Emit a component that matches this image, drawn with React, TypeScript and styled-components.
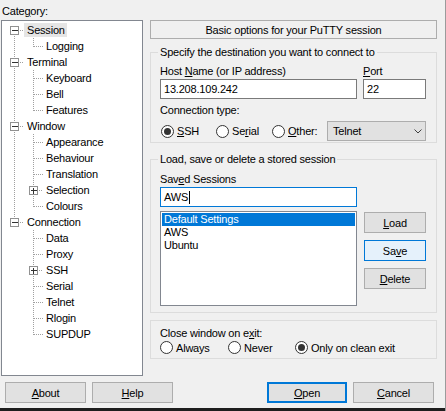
import React from 'react';
import styled, { createGlobalStyle } from 'styled-components';

const GlobalStyle = createGlobalStyle`
  html, body {
    margin: 0;
    padding: 0;
    background: #f0f0f0;
  }
  * {
    box-sizing: border-box;
  }
`;

const Window = styled.div`
  width: 446px;
  height: 411px;
  display: flex;
  flex-direction: column;
  background: #f0f0f0;
  border-right: 1px solid #9b9b9b;
  font-family: "Liberation Sans", Arial, sans-serif;
  font-size: 11px;
  letter-spacing: -0.2px;
  color: #000;
  overflow: hidden;
`;

const Main = styled.div`
  display: flex;
  height: 376px;
`;

const LeftColumn = styled.div`
  width: 150px;
  padding-left: 1px;
  display: flex;
  flex-direction: column;
`;

const CategoryLabel = styled.div`
  height: 20px;
  padding: 4px 0 0 1px;
  line-height: 14px;
`;

const TreeBox = styled.div`
  width: 142px;
  height: 356px;
  border: 1px solid #828790;
  background: #fff;
  padding-top: 1px;
  overflow: hidden;
`;

const TreeRow = styled.div`
  display: flex;
  height: 16px;
  white-space: nowrap;
`;

const TreeLabel = styled.span<{ $selected?: boolean }>`
  height: 14px;
  margin-top: 1px;
  padding: 0 2px 0 3px;
  line-height: 14px;
  background: ${({ $selected }) => ($selected ? '#e5e5e5' : 'transparent')};
`;

const RightColumn = styled.div`
  width: 287px;
  display: flex;
  flex-direction: column;
  padding-top: 20px;
`;

const HeaderBox = styled.div`
  height: 19px;
  border: 1px solid #adadad;
  display: flex;
  align-items: center;
  justify-content: center;
  line-height: 14px;
`;

const Group = styled.fieldset<{ $top: number; $pt: number; $pb: number }>`
  margin: ${({ $top }) => $top}px 0 0;
  padding: ${({ $pt }) => $pt}px 9px ${({ $pb }) => $pb}px;
  border: 1px solid #dcdcdc;
  min-width: 0;
`;

const Legend = styled.legend`
  margin-left: -2px;
  padding: 0 2px;
  line-height: 14px;
`;

const PlainGroup = styled.div`
  margin-top: 7px;
  padding: 5px 9px 4px;
  border: 1px solid #dcdcdc;
`;

const Label = styled.div<{ $gap?: number }>`
  line-height: 14px;
  height: 14px;
  margin-top: ${({ $gap }) => $gap ?? 0}px;
  white-space: nowrap;
`;

const HostGrid = styled.div`
  display: grid;
  grid-template-columns: 197px 63px;
  column-gap: 6px;
`;

const TextField = styled.div<{ $focused?: boolean; $gap?: number }>`
  height: 20px;
  margin-top: ${({ $gap }) => $gap ?? 1}px;
  border: 1px solid ${({ $focused }) => ($focused ? '#0078d7' : '#7a7a7a')};
  background: #fff;
  padding: 0 2px 0 3px;
  display: flex;
  align-items: center;
  white-space: nowrap;
`;

const Caret = styled.span`
  width: 1px;
  height: 13px;
  margin-left: 1px;
  background: #000;
`;

const RadioRow = styled.div<{ $columns: string; $height: number; $gap: number; $indent?: number }>`
  display: grid;
  grid-template-columns: ${({ $columns }) => $columns};
  height: ${({ $height }) => $height}px;
  margin-top: ${({ $gap }) => $gap}px;
  padding-left: ${({ $indent }) => $indent ?? 0}px;
  align-items: center;
`;

const Radio = styled.div`
  display: flex;
  align-items: center;
  gap: 3px;
  white-space: nowrap;
`;

const RadioCircle = styled.span<{ $checked?: boolean }>`
  width: 13px;
  height: 13px;
  border-radius: 50%;
  border: 1px solid #333;
  background: #fff;
  display: flex;
  align-items: center;
  justify-content: center;
  flex-shrink: 0;
  &::after {
    content: '';
    width: 7px;
    height: 7px;
    border-radius: 50%;
    background: #333;
    display: ${({ $checked }) => ($checked ? 'block' : 'none')};
  }
`;

const Combo = styled.div`
  height: 20px;
  border: 1px solid #adadad;
  background: #e1e1e1;
  padding: 0 3px 0 5px;
  display: flex;
  align-items: center;
  justify-content: space-between;
`;

const SessionGrid = styled.div`
  display: grid;
  grid-template-columns: 197px 62px;
  column-gap: 7px;
  margin-top: 4px;
`;

const ListBox = styled.div`
  height: 95px;
  border: 1px solid #828790;
  background: #fff;
  padding: 1px;
`;

const ListItem = styled.div<{ $selected?: boolean }>`
  height: 13px;
  line-height: 13px;
  padding-left: 2px;
  background: ${({ $selected }) => ($selected ? '#0078d7' : 'transparent')};
  color: ${({ $selected }) => ($selected ? '#fff' : '#000')};
`;

const SideButtons = styled.div`
  display: flex;
  flex-direction: column;
  gap: 7px;
  padding-top: 1px;
`;

const Button = styled.div<{ $width: number; $variant?: 'default' | 'hot' }>`
  width: ${({ $width }) => $width}px;
  height: 21px;
  display: flex;
  align-items: center;
  justify-content: center;
  background: ${({ $variant }) => ($variant === 'hot' ? '#e5f1fb' : '#e1e1e1')};
  border: ${({ $variant }) =>
    $variant === 'default'
      ? '2px solid #0078d7'
      : $variant === 'hot'
        ? '1px solid #0078d7'
        : '1px solid #adadad'};
  white-space: nowrap;
`;

const ButtonBar = styled.div`
  display: flex;
  gap: 6px;
  margin-top: 6px;
  padding: 0 11px 0 5px;
`;

const Spacer = styled.div`
  flex: 1;
`;

const TaskbarEdge = styled.div`
  margin-top: auto;
  height: 3px;
  background: #1e1e1e;
`;

type TreeNode = {
  label: string;
  level: 0 | 1;
  expander?: '-' | '+';
  first?: boolean;
  last?: boolean;
  parentHasNext?: boolean;
  selected?: boolean;
};

const tree: TreeNode[] = [
  { label: 'Session', level: 0, expander: '-', first: true, selected: true },
  { label: 'Logging', level: 1, last: true, parentHasNext: true },
  { label: 'Terminal', level: 0, expander: '-' },
  { label: 'Keyboard', level: 1, parentHasNext: true },
  { label: 'Bell', level: 1, parentHasNext: true },
  { label: 'Features', level: 1, last: true, parentHasNext: true },
  { label: 'Window', level: 0, expander: '-' },
  { label: 'Appearance', level: 1, parentHasNext: true },
  { label: 'Behaviour', level: 1, parentHasNext: true },
  { label: 'Translation', level: 1, parentHasNext: true },
  { label: 'Selection', level: 1, expander: '+', parentHasNext: true },
  { label: 'Colours', level: 1, last: true, parentHasNext: true },
  { label: 'Connection', level: 0, expander: '-', last: true },
  { label: 'Data', level: 1 },
  { label: 'Proxy', level: 1 },
  { label: 'SSH', level: 1, expander: '+' },
  { label: 'Serial', level: 1 },
  { label: 'Telnet', level: 1 },
  { label: 'Rlogin', level: 1 },
  { label: 'SUPDUP', level: 1, last: true },
];

const DOT = '#a0a0a0';

function Guide({ node }: { node: TreeNode }) {
  const width = 22 + 19 * node.level;
  const cx = 12.5 + 19 * node.level;
  const box = !!node.expander;
  const dotted = { stroke: DOT, strokeWidth: 1, strokeDasharray: '1 1' };
  return (
    <svg width={width} height={16} shapeRendering="crispEdges" style={{ flexShrink: 0 }}>
      {node.level === 1 && node.parentHasNext && <line x1={12.5} y1={0} x2={12.5} y2={16} {...dotted} />}
      {!node.first && <line x1={cx} y1={0} x2={cx} y2={box ? 4 : 8.5} {...dotted} />}
      {!node.last && <line x1={cx} y1={box ? 14 : 8} x2={cx} y2={16} {...dotted} />}
      <line x1={box ? cx + 5.5 : cx + 0.5} y1={8.5} x2={width} y2={8.5} {...dotted} />
      {box && (
        <g>
          <rect x={cx - 4} y={4.5} width={8} height={8} fill="#fff" stroke="#919191" />
          <line x1={cx - 2.5} y1={8.5} x2={cx + 3} y2={8.5} stroke="#333" />
          {node.expander === '+' && <line x1={cx} y1={6} x2={cx} y2={11.5} stroke="#333" />}
        </g>
      )}
    </svg>
  );
}

function Chevron() {
  return (
    <svg width={8} height={5} viewBox="0 0 8 5">
      <polyline points="0.5,0.5 4,4 7.5,0.5" fill="none" stroke="#404040" strokeWidth={1} />
    </svg>
  );
}

export default function App() {
  return (
    <>
      <GlobalStyle />
      <Window>
        <Main>
          <LeftColumn>
            <CategoryLabel>
              Cate<u>g</u>ory:
            </CategoryLabel>
            <TreeBox>
              {tree.map((node) => (
                <TreeRow key={node.label}>
                  <Guide node={node} />
                  <TreeLabel $selected={node.selected}>{node.label}</TreeLabel>
                </TreeRow>
              ))}
            </TreeBox>
          </LeftColumn>
          <RightColumn>
            <HeaderBox>Basic options for your PuTTY session</HeaderBox>

            <Group $top={6} $pt={5} $pb={1}>
              <Legend>Specify the destination you want to connect to</Legend>
              <HostGrid>
                <Label>
                  Host <u>N</u>ame (or IP address)
                </Label>
                <Label>
                  <u>P</u>ort
                </Label>
                <TextField>13.208.109.242</TextField>
                <TextField>22</TextField>
              </HostGrid>
              <Label $gap={4}>Connection type:</Label>
              <RadioRow $columns="55px 56px 55px 99px" $height={20} $gap={4} $indent={1}>
                <Radio>
                  <RadioCircle $checked />
                  <span>
                    <u>S</u>SH
                  </span>
                </Radio>
                <Radio>
                  <RadioCircle />
                  <span>
                    Se<u>r</u>ial
                  </span>
                </Radio>
                <Radio>
                  <RadioCircle />
                  <span>
                    <u>O</u>ther:
                  </span>
                </Radio>
                <Combo>
                  <span>Telnet</span>
                  <Chevron />
                </Combo>
              </RadioRow>
            </Group>

            <Group $top={9} $pt={6} $pb={6}>
              <Legend>Load, save or delete a stored session</Legend>
              <Label>
                Sav<u>e</u>d Sessions
              </Label>
              <TextField $focused style={{ width: 197 }}>
                AWS
                <Caret />
              </TextField>
              <SessionGrid>
                <ListBox>
                  <ListItem $selected>Default Settings</ListItem>
                  <ListItem>AWS</ListItem>
                  <ListItem>Ubuntu</ListItem>
                </ListBox>
                <SideButtons>
                  <Button $width={62}>
                    <u>L</u>oad
                  </Button>
                  <Button $width={62} $variant="hot">
                    Sa<u>v</u>e
                  </Button>
                  <Button $width={62}>
                    <u>D</u>elete
                  </Button>
                </SideButtons>
              </SessionGrid>
            </Group>

            <PlainGroup>
              <Label>
                Close window on e<u>x</u>it:
              </Label>
              <RadioRow $columns="68px 67px auto" $height={13} $gap={1}>
                <Radio>
                  <RadioCircle />
                  <span>Always</span>
                </Radio>
                <Radio>
                  <RadioCircle />
                  <span>Never</span>
                </Radio>
                <Radio>
                  <RadioCircle $checked />
                  <span>Only on clean exit</span>
                </Radio>
              </RadioRow>
            </PlainGroup>
          </RightColumn>
        </Main>

        <ButtonBar>
          <Button $width={81}>
            <u>A</u>bout
          </Button>
          <Button $width={81}>
            <u>H</u>elp
          </Button>
          <Spacer />
          <Button $width={80} $variant="default">
            <u>O</u>pen
          </Button>
          <Button $width={81}>
            <u>C</u>ancel
          </Button>
        </ButtonBar>
        <TaskbarEdge />
      </Window>
    </>
  );
}
